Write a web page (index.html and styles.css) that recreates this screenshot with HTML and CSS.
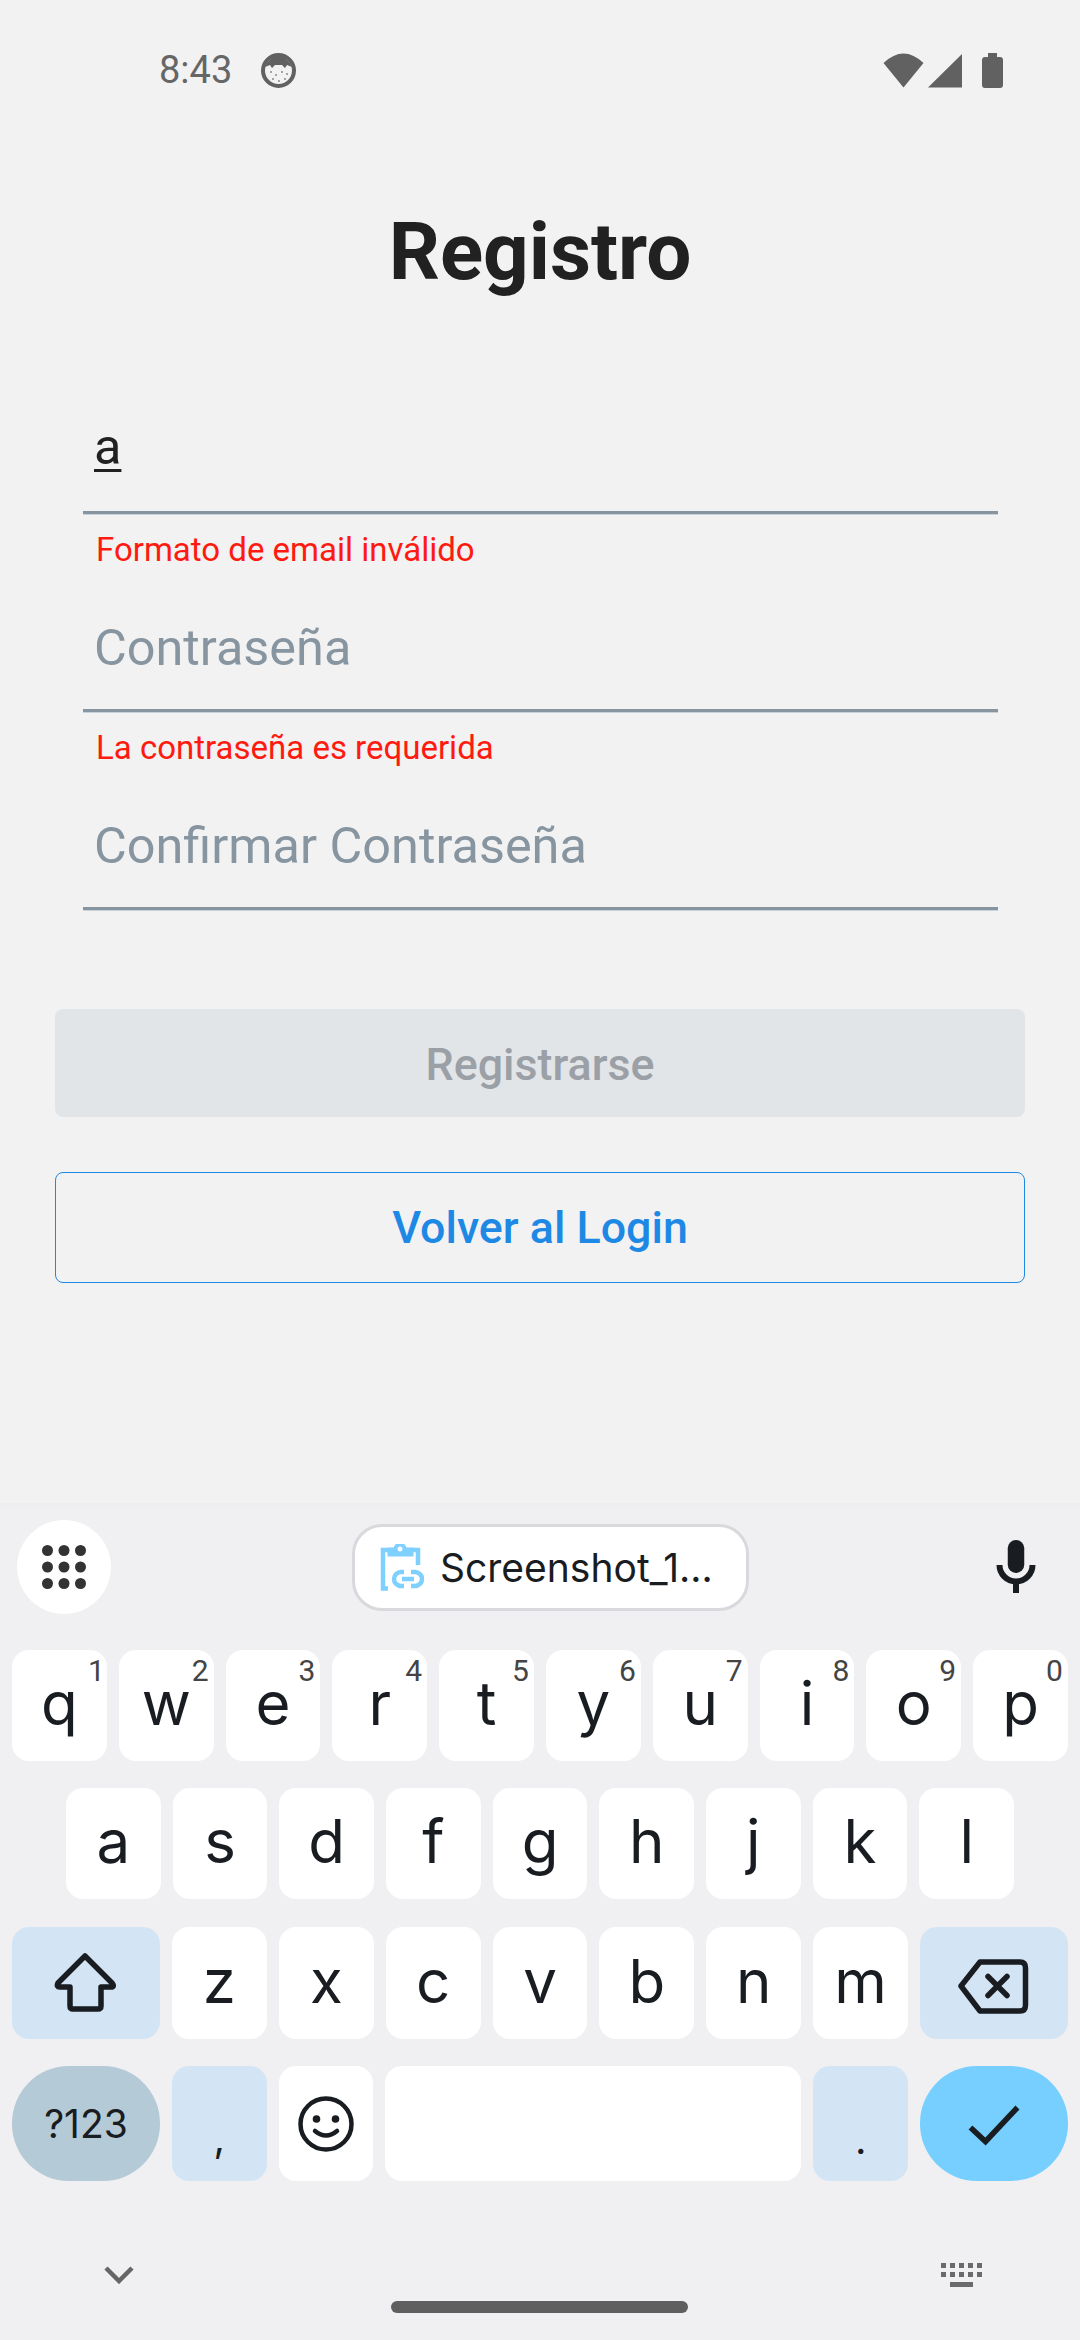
FILE: index.html
```html
<!DOCTYPE html>
<html lang="es">
<head>
<meta charset="utf-8">
<title>Registro</title>
<link rel="stylesheet" href="styles.css">
</head>
<body>
<div class="screen">
  <header class="status">
    <div class="status-left">
      <span class="time">8:43</span>
      <svg class="face" width="35" height="35" viewBox="0 0 35 35"><circle cx="17.5" cy="17.5" r="15.5" fill="#f2f2f2" stroke="#616161" stroke-width="4"/><path d="M4 14 Q8 4 17.5 3 Q27 4 31 14 L26 12 L24 15 L21 12 H14 L11 15 L9 12 Z" fill="#616161"/><g fill="#8a8a8a"><circle cx="10" cy="19" r="1"/><circle cx="15" cy="22" r="1"/><circle cx="21" cy="19" r="1"/><circle cx="26" cy="21" r="1"/><circle cx="12" cy="26" r="1"/><circle cx="18" cy="28" r="1"/><circle cx="24" cy="26" r="1"/></g></svg>
    </div>
    <div class="status-right">
      <svg width="41" height="35" viewBox="0 0 41 35"><path d="M0.5 10 Q20.5 -9 40.5 10 L20.5 34.5 Z" fill="#616161"/></svg>
      <svg class="signal" width="34" height="35" viewBox="0 0 34 35"><path d="M34 1 V34.5 H0 Z" fill="#616161"/></svg>
      <svg class="battery" width="21" height="35" viewBox="0 0 21 35"><path d="M6 0 H15 V4 H18 Q21 4 21 7 V32 Q21 35 18 35 H3 Q0 35 0 32 V7 Q0 4 3 4 H6 Z" fill="#616161"/></svg>
    </div>
  </header>

  <main class="form">
    <h1 class="title">Registro</h1>
    <div class="field field-first"><span class="value">a</span></div>
    <p class="error">Formato de email inválido</p>
    <div class="field"><span class="placeholder">Contraseña</span></div>
    <p class="error">La contraseña es requerida</p>
    <div class="field"><span class="placeholder">Confirmar Contraseña</span></div>
    <div class="btn btn-disabled">Registrarse</div>
    <div class="btn btn-outline">Volver al Login</div>
  </main>

  <section class="keyboard">
    <div class="kb-top">
      <div class="kb-round">
        <svg width="58" height="44" viewBox="0 0 58 44"><g fill="#333"><circle cx="12.5" cy="5.5" r="5.5"/><circle cx="29" cy="5.5" r="5.5"/><circle cx="45.5" cy="5.5" r="5.5"/><circle cx="12.5" cy="22" r="5.5"/><circle cx="29" cy="22" r="5.5"/><circle cx="45.5" cy="22" r="5.5"/><circle cx="12.5" cy="38.5" r="5.5"/><circle cx="29" cy="38.5" r="5.5"/><circle cx="45.5" cy="38.5" r="5.5"/></g></svg>
      </div>
      <div class="chip">
        <svg width="44" height="47" viewBox="0 0 44 47"><g fill="none" stroke="#7ed0ff" stroke-width="4.5"><path d="M8 6 H3 V44.5 H8"/><path d="M32 6 H38 V21"/><path d="M9 5 V11 H32 V5 H25 A5 5 0 0 0 15 5 Z" fill="#7ed0ff" stroke-width="3"/><path d="M24 28 H21 A7 7 0 0 0 21 42 H24"/><path d="M31 28 H35 A7 7 0 0 1 35 42 H31"/><path d="M22 35 H34"/></g><circle cx="20" cy="5" r="2.5" fill="#f8fcff"/></svg>
        <span class="chip-text">Screenshot_1…</span>
      </div>
      <svg class="mic" width="40" height="54" viewBox="0 0 40 54"><rect x="11.75" y="0" width="16.5" height="33" rx="8.25" fill="#191c20"/><path d="M3.5 25 A16.5 16.5 0 0 0 36.5 25" fill="none" stroke="#191c20" stroke-width="6"/><path d="M20 42 V53" stroke="#191c20" stroke-width="6"/></svg>
    </div>

    <div class="row row-1">
      <div class="key">q<sup class="hint hint-one">1</sup></div>
      <div class="key">w<sup class="hint">2</sup></div>
      <div class="key">e<sup class="hint">3</sup></div>
      <div class="key">r<sup class="hint">4</sup></div>
      <div class="key">t<sup class="hint">5</sup></div>
      <div class="key">y<sup class="hint">6</sup></div>
      <div class="key">u<sup class="hint">7</sup></div>
      <div class="key">i<sup class="hint">8</sup></div>
      <div class="key">o<sup class="hint">9</sup></div>
      <div class="key">p<sup class="hint">0</sup></div>
    </div>
    <div class="row row-2">
      <div class="key">a</div><div class="key">s</div><div class="key">d</div><div class="key">f</div><div class="key">g</div><div class="key">h</div><div class="key">j</div><div class="key">k</div><div class="key">l</div>
    </div>
    <div class="row row-3">
      <div class="key key-icon key-wide key-blue">
        <svg width="64" height="62" viewBox="0 0 64 62"><path d="M31 4 L4 31 Q2 35 6 35 H16 V54 Q16 57 19 57 H44 Q47 57 47 54 V35 H57 Q61 35 58 31 Z" fill="none" stroke="#191c20" stroke-width="5.5" stroke-linejoin="round"/></svg>
      </div>
      <div class="key">z</div><div class="key">x</div><div class="key">c</div><div class="key">v</div><div class="key">b</div><div class="key">n</div><div class="key">m</div>
      <div class="key key-icon key-wide key-blue">
        <svg class="backspace" width="74" height="60" viewBox="0 0 74 60"><path d="M23 6 H63 Q68.5 6 68.5 12 V49 Q68.5 55 63 55 H23 L4 30 Z" fill="none" stroke="#191c20" stroke-width="5.5" stroke-linejoin="round"/><path d="M31 20.5 L50 39.5 M50 20.5 L31 39.5" stroke="#191c20" stroke-width="5.5" stroke-linecap="round"/></svg>
      </div>
    </div>
    <div class="row row-4">
      <div class="key key-icon key-wide key-sym">?123</div>
      <div class="key key-icon key-blue key-punct key-comma">,</div>
      <div class="key key-icon">
        <svg width="60" height="60" viewBox="0 0 60 60"><circle cx="30" cy="30" r="25.5" fill="none" stroke="#191c20" stroke-width="4.5"/><circle cx="20.5" cy="25" r="3.8" fill="#191c20"/><circle cx="39.5" cy="25" r="3.8" fill="#191c20"/><path d="M19 37 Q30 46 41 37" fill="none" stroke="#191c20" stroke-width="4.5" stroke-linecap="round"/></svg>
      </div>
      <div class="key key-icon key-space"></div>
      <div class="key key-icon key-blue key-punct">.</div>
      <div class="key key-icon key-wide key-enter">
        <svg width="60" height="48" viewBox="0 0 60 48"><path d="M6.5 27.5 L21.5 41.5 L53.5 7.5" fill="none" stroke="#191c20" stroke-width="5.5"/></svg>
      </div>
    </div>

    <div class="kb-bottom">
      <svg class="chevron" width="30" height="18" viewBox="0 0 30 18"><path d="M2 2 L15 15 L28 2" fill="none" stroke="#666" stroke-width="4.5"/></svg>
      <div class="pill"></div>
      <svg class="kb-icon" width="42" height="24" viewBox="0 0 42 24"><g fill="#6a6a6a"><rect x="0" y="0" width="5" height="5"/><rect x="9" y="0" width="5" height="5"/><rect x="18" y="0" width="5" height="5"/><rect x="27" y="0" width="5" height="5"/><rect x="36" y="0" width="5" height="5"/><rect x="0" y="9" width="5" height="5"/><rect x="9" y="9" width="5" height="5"/><rect x="18" y="9" width="5" height="5"/><rect x="27" y="9" width="5" height="5"/><rect x="36" y="9" width="5" height="5"/><rect x="9" y="19" width="23" height="5"/></g></svg>
    </div>
  </section>
</div>
</body>
</html>
```
FILE: styles.css
```css
* { box-sizing: border-box; }
html, body { margin: 0; padding: 0; }
body { width: 1080px; height: 2340px; overflow: hidden; background: #f2f2f2; font-family: Roboto, "Liberation Sans", sans-serif; }
.screen { width: 1080px; height: 2340px; display: flex; flex-direction: column; }

.status { height: 88px; padding: 53px 77px 0 159px; display: flex; justify-content: space-between; flex: none; }
.status-left { display: flex; align-items: center; height: 35px; gap: 29px; }
.time { font-size: 38px; font-weight: 400; color: #666; line-height: 35px; }
.status-right { display: flex; height: 35px; }
.signal { margin-left: 4px; }
.battery { margin-left: 20px; }

.form { flex: 1; display: flex; flex-direction: column; }
.title { margin: 124px 0 0; text-align: center; font-size: 80px; line-height: 80px; font-weight: 700; color: #212121; }
.field { margin: 0 82px 0 83px; height: 132px; border-bottom: 3px solid #8795a1; box-shadow: 0 1px 0 #c8d2da; padding: 0 11px; display: flex; align-items: flex-end; font-size: 50.4px; line-height: 56px; }
.field-first { margin-top: 89px; height: 133px; }
.placeholder { margin-bottom: 33px; color: #8795a1; }
.value { margin-bottom: 36px; color: #212121; text-decoration: underline; text-decoration-thickness: 3px; text-underline-offset: 5px; }
.error { margin: 0; padding: 17px 96px 0; height: 66px; font-size: 33px; line-height: 38px; color: #ff1a10; }

.btn { margin: 0 55px; display: flex; align-items: center; justify-content: center; border-radius: 8px; font-size: 44.8px; font-weight: 500; }
.btn-disabled { margin-top: 99px; height: 108px; padding-top: 2px; background: #e2e5e8; color: #9aa0a6; }
.btn-outline { margin-top: 55px; height: 111px; border: 1px solid #1e88e5; color: #1e88e5; }

.keyboard { flex: none; height: 837px; background: #f0f0f3; border-top: 4px solid #eeeeee; position: relative; display: flex; flex-direction: column; font-family: Inter, Roboto, sans-serif; color: #191c20; }
.kb-top { height: 143px; padding: 13px 44px 0 17px; display: flex; align-items: flex-start; flex: none; }
.kb-round { width: 94px; height: 94px; border-radius: 50%; background: #fff; display: flex; align-items: center; justify-content: center; flex: none; }
.chip { margin-left: 241px; margin-top: 4px; width: 397px; height: 87px; border: 3px solid #d8d9dc; border-radius: 30px; background: #fff; display: flex; align-items: center; padding-left: 25px; gap: 16px; flex: none; }
.chip-text { font-size: 39px; color: #191c20; white-space: nowrap; }
.mic { margin-left: 247px; margin-top: 20px; flex: none; }

.row { display: flex; gap: 12px; padding: 0 12px; flex: none; }
.row-1 { height: 111px; }
.row-2 { height: 111px; margin-top: 27px; padding: 0 66px; }
.row-3 { height: 112px; margin-top: 28px; }
.row-4 { height: 115px; margin-top: 27px; }

.key { flex: 1 1 0; min-width: 0; position: relative; background: #fff; border-radius: 17px; display: flex; align-items: center; justify-content: center; font-size: 60px; padding-bottom: 5px; }
.key-icon { padding-bottom: 0; }
.key-wide { flex: 0 0 148px; }
.key-space { flex: 0 0 416px; }
.key-blue { background: #d3e5f4; }
.key-sym { background: #b4cad7; border-radius: 57px; font-size: 39px; }
.key-enter { background: #76cfff; border-radius: 57px; }
.key-punct { font-size: 40px; padding-top: 32px; }
.key-comma { padding-top: 28px; }
.backspace { margin-top: 5px; }
.hint { position: absolute; top: 3px; right: 5px; font-family: Roboto, sans-serif; font-size: 30px; line-height: 36px; color: #444; vertical-align: baseline; }
.hint-one { right: 2px; }

.kb-bottom { flex: 1; position: relative; display: flex; align-items: flex-start; justify-content: space-between; padding: 82px 97px 0 104px; }
.chevron { margin-top: 3px; }
.pill { position: absolute; left: 391px; top: 120px; width: 297px; height: 12px; border-radius: 6px; background: #5f5f5f; }
```
